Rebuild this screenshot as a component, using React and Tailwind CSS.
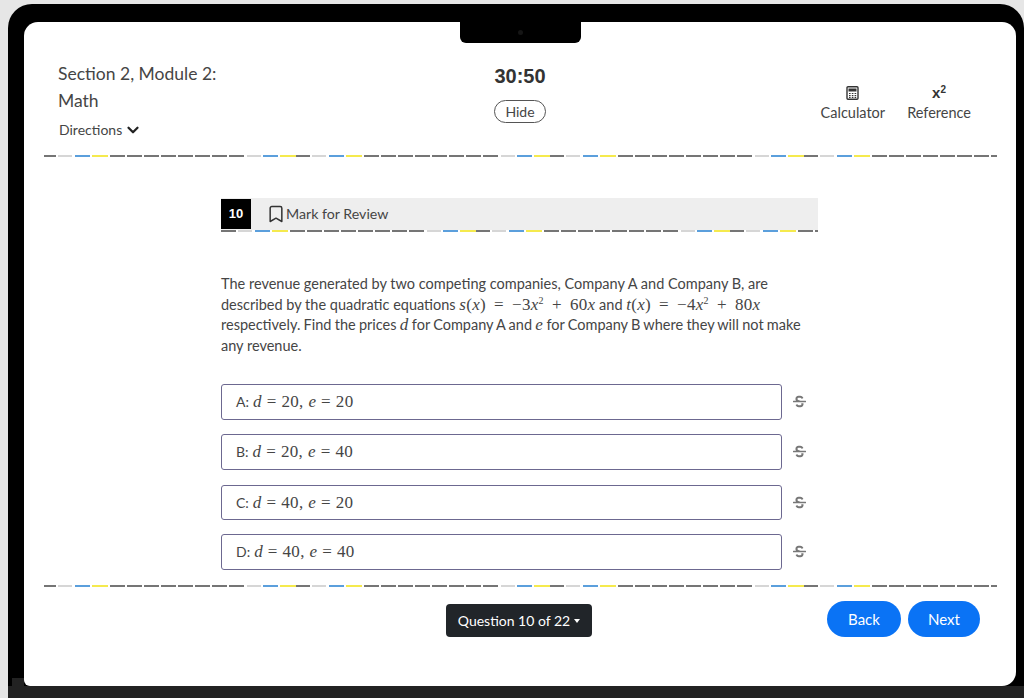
import React from 'react';
import { Bookmark, ChevronDown } from 'lucide-react';
import { FaStrikethrough } from 'react-icons/fa';

const GRAYS = [0, 1, 2, 3, 4, 5, 6, 7];

const Dash = ({ className }) => <span className={`h-[2px] shrink-0 ${className}`} />;

const DashGroup = () => (
    <>
        <Dash className="w-[14px] ml-[2px] bg-[#d6d6d6]" />
        <Dash className="w-[15px] ml-[3px] bg-[#5b9fdc]" />
        <Dash className="w-[16px] ml-[2px] bg-[#f5ea4e]" />
        {GRAYS.map((i) => (
            <Dash key={i} className="w-[15px] ml-[2px] first:ml-0 bg-[#757575]" />
        ))}
        <Dash className="w-[14px] ml-[3px] bg-[#d6d6d6]" />
        <Dash className="w-[15px] ml-[2px] bg-[#5b9fdc]" />
        <Dash className="w-[16px] ml-[2px] bg-[#f5ea4e]" />
        <Dash className="w-[14px] bg-[#757575]" />
    </>
);

const DashedLine = ({ className = '', lead = 'w-[12px]' }) => (
    <div className={`flex h-[2px] overflow-hidden ${className}`}>
        <Dash className={`${lead} bg-[#757575]`} />
        <DashGroup />
        <DashGroup />
        <DashGroup />
        <DashGroup />
    </div>
);

const CalcIcon = () => (
    <svg width="13" height="14" viewBox="0 0 13 14" className="my-[2px] text-[#333]" fill="none" stroke="currentColor">
        <rect x="1" y="0.75" width="11" height="12.5" rx="1" strokeWidth="1.4" />
        <rect x="2.5" y="2.5" width="8" height="3" fill="currentColor" stroke="none" />
        <path d="M3 7.5h1.6M5.8 7.5h1.6M8.6 7.5h1.6M3 9.5h1.6M5.8 9.5h1.6M8.6 9.5h1.6M3 11.4h1.6M5.8 11.4h1.6M8.6 11.4h1.6" strokeWidth="1.2" />
    </svg>
);

const M = ({ children, className = '[word-spacing:0.3px]' }) => (
    <span className={`font-['Liberation_Serif',serif] text-[17px] leading-none tracking-[0.3px] ${className}`}>{children}</span>
);
const V = ({ children }) => <i>{children}</i>;
const Sup = ({ children }) => <sup className="text-[10px] leading-none -top-[6px]">{children}</sup>;

const options = [
    { label: 'A', d: '20', e: '20', cls: 'mb-[14px] h-[36px]' },
    { label: 'B', d: '20', e: '40', cls: 'mb-[15px] h-[36px]' },
    { label: 'C', d: '40', e: '20', cls: 'mb-[14px] h-[35px]' },
    { label: 'D', d: '40', e: '40', cls: 'h-[36px]' },
];

export default function App() {
    return (
        <div className="h-[698px] w-[1024px] overflow-hidden bg-[#e6e6e6] pt-[4px] pl-[8px] font-['Lato',sans-serif] text-[#454545]">
            <div className="flex h-[694px] flex-col rounded-t-[24px] bg-black">
                <div className="relative mt-[18px] mr-[8px] ml-[16px] flex h-[664px] flex-col rounded-[14px] rounded-bl-[6px] bg-white">
                    <span className="absolute bottom-0 -left-[12px] h-[8px] w-[12px] bg-[#222222]" />
                    <div className="absolute top-0 left-[436px] flex h-[21px] w-[121px] items-center justify-center rounded-b-[6px] bg-black">
                        <span className="h-[5px] w-[5px] rounded-full bg-[#151515]" />
                    </div>

                    <header className="grid h-[133px] grid-cols-[1fr_auto_1fr] px-[34px]">
                        <div className="pt-[40px]">
                            <div className="text-[17.5px] leading-[24px]">Section 2, Module 2:</div>
                            <div className="mt-[3px] text-[17.5px] leading-[24px]">Math</div>
                            <div className="mt-[7px] flex items-center gap-[2px] pl-[1px] text-[14px] leading-[20px]">
                                Directions
                                <ChevronDown size={18} strokeWidth={3} className="text-[#222]" />
                            </div>
                        </div>
                        <div className="flex flex-col items-center pt-[40px]">
                            <div className="font-['Liberation_Sans',sans-serif] text-[20px] leading-[28px] font-bold text-[#333]">30:50</div>
                            <div className="mt-[10px] flex h-[23px] w-[52px] items-center justify-center rounded-full border border-[#555] text-[14px]">Hide</div>
                        </div>
                        <div className="flex justify-end gap-[22px] pt-[62px] pr-[11px] text-[14.5px]">
                            <div className="flex flex-col items-center">
                                <CalcIcon />
                                <span className="mt-[1px] leading-[20px]">Calculator</span>
                            </div>
                            <div className="flex flex-col items-center">
                                <span className="flex h-[18px] items-center font-['Liberation_Sans',sans-serif] text-[15px] font-bold text-[#333]">
                                    x<sup className="-top-[3px] text-[10px]">2</sup>
                                </span>
                                <span className="mt-[1px] leading-[20px]">Reference</span>
                            </div>
                        </div>
                    </header>

                    <DashedLine className="ml-[20px] w-[953px]" />

                    <main className="flex-1 pl-[197px]">
                        <div className="mt-[41px] w-[597px]">
                            <div className="flex h-[32px] items-center bg-[#eeeeee]">
                                <div className="mt-[1px] flex h-[30px] w-[30px] items-center justify-center self-start bg-black font-['Liberation_Sans',sans-serif] text-[13px] font-bold text-white">10</div>
                                <Bookmark size={20} strokeWidth={1.8} className="ml-[15px] text-[#333]" />
                                <span className="text-[14.2px]">Mark for Review</span>
                            </div>
                            <DashedLine lead="w-[15px]" />
                        </div>

                        <p className="mt-[42px] w-[597px] text-[14.5px] leading-[20.7px]">
                            The revenue generated by two competing companies, Company A and Company B, are
                            <br />
                            described by the quadratic equations{' '}
                            <M className="[word-spacing:3.5px]">
                                <V>s</V>(<V>x</V>) = −3<V>x</V><Sup>2</Sup> + 60<V>x</V>
                            </M>{' '}
                            and{' '}
                            <M className="[word-spacing:3.5px]">
                                <V>t</V>(<V>x</V>) = −4<V>x</V><Sup>2</Sup> + 80<V>x</V>
                            </M>
                            <br />
                            <span className="[word-spacing:-0.45px]">
                                respectively. Find the prices <M><V>d</V></M> for Company A and <M><V>e</V></M> for Company B where they will not make
                            </span>
                            <br />
                            any revenue.
                        </p>

                        <div className="mt-[27px] flex w-[590px] flex-col">
                            {options.map((o) => (
                                <div key={o.label} className={`flex items-center ${o.cls}`}>
                                    <div className="flex h-full w-[561px] items-center gap-[4px] rounded-[3px] border-[1.5px] border-[#6c6890] pl-[14px] text-[14px]">
                                        {o.label}:{' '}
                                        <M>
                                            <V>d</V> = {o.d}, <V>e</V> = {o.e}
                                        </M>
                                    </div>
                                    <FaStrikethrough size={13} className="ml-[11px] text-[#777]" />
                                </div>
                            ))}
                        </div>
                    </main>

                    <DashedLine className="ml-[20px] w-[953px]" />

                    <footer className="flex h-[99px] items-start pl-[422px]">
                        <div className="mt-[17px] flex h-[33px] w-[146px] items-center justify-center gap-[4px] rounded-[4px] bg-[#212529] text-[14px] text-white">
                            Question 10 of 22
                            <span className="mt-[1px] h-0 w-0 border-x-[3.5px] border-t-[4px] border-x-transparent border-t-white" />
                        </div>
                        <div className="mt-[14px] ml-auto flex gap-[7px] pr-[36px] text-[15px] text-white">
                            <div className="flex h-[36px] w-[74px] items-center justify-center rounded-full bg-[#0a73f5]">Back</div>
                            <div className="flex h-[36px] w-[72px] items-center justify-center rounded-full bg-[#0a73f5]">Next</div>
                        </div>
                    </footer>
                </div>
                <div className="flex-1 bg-[#222222]" />
            </div>
        </div>
    );
}
